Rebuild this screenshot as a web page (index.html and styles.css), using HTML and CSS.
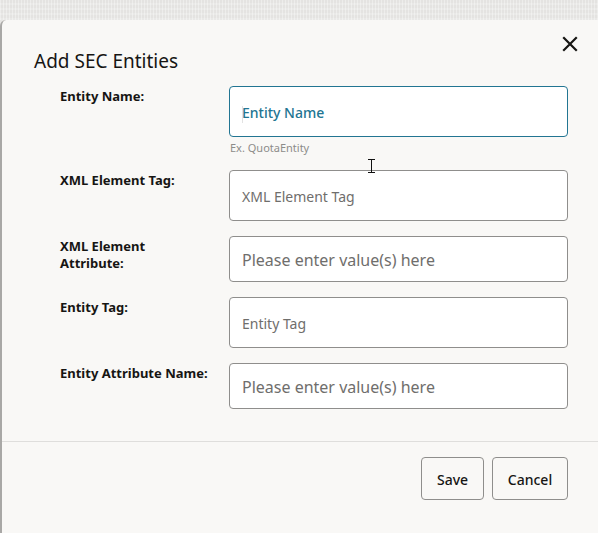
FILE: index.html
```html
<!DOCTYPE html>
<html>
<head>
<meta charset="utf-8">
<link rel="stylesheet" href="styles.css">
</head>
<body>
<div class="backdrop"></div>
<div class="dialog">
  <div class="header">
    <h1 class="title">Add SEC Entities</h1>
    <button class="close" aria-label="Close">
      <svg width="16" height="16" viewBox="0 0 16 16"><path d="M2 2 L14 14 M14 2 L2 14" stroke="#161513" stroke-width="2.2" stroke-linecap="square"/></svg>
    </button>
  </div>
  <div class="form">
    <div class="row">
      <label class="label">Entity Name:</label>
      <div class="field">
        <div class="input focused"><span class="caret"></span><span class="val teal">Entity Name</span></div>
        <div class="help">Ex. QuotaEntity</div>
      </div>
    </div>
    <div class="row">
      <label class="label">XML Element Tag:</label>
      <div class="field"><div class="input"><span class="val">XML Element Tag</span></div></div>
    </div>
    <div class="row">
      <label class="label">XML Element<br>Attribute:</label>
      <div class="field"><div class="input short"><span class="val big">Please enter value(s) here</span></div></div>
    </div>
    <div class="row">
      <label class="label">Entity Tag:</label>
      <div class="field"><div class="input"><span class="val">Entity Tag</span></div></div>
    </div>
    <div class="row">
      <label class="label">Entity Attribute Name:</label>
      <div class="field"><div class="input short"><span class="val big">Please enter value(s) here</span></div></div>
    </div>
  </div>
  <div class="footer">
    <button class="btn save">Save</button>
    <button class="btn cancel">Cancel</button>
  </div>
  <svg class="ibeam" width="9" height="14" viewBox="0 0 9 14"><path d="M1 0.5 H8 M4.5 0.5 V13.5 M1 13.5 H8" stroke="#111" stroke-width="1"/></svg>
</div>
</body>
</html>
```

FILE: styles.css
```css
* { box-sizing: border-box; }
html, body {
  margin: 0;
  padding: 0;
  height: 533px;
  overflow: hidden;
  background: #e6e5e3;
  font-family: "Noto Sans", "Open Sans", sans-serif;
}
.backdrop {
  height: 20px;
  background:
    repeating-linear-gradient(90deg, rgba(255,255,255,0.35) 0 1px, transparent 1px 3px),
    repeating-linear-gradient(0deg, rgba(255,255,255,0.2) 0 2px, transparent 2px 5px),
    #e4e3e1;
}
.dialog {
  position: relative;
  height: 513px;
  background: #f9f8f6;
  border-left: 2px solid #a9a8a6;
  border-top-left-radius: 6px;
}
.header {
  display: flex;
  justify-content: space-between;
  align-items: flex-start;
  padding: 27px 20px 0 32px;
}
.title {
  margin: 0;
  font-size: 19px;
  font-weight: 400;
  color: #161513;
  line-height: 28px;
}
.close {
  border: 0;
  background: transparent;
  padding: 0;
  margin-top: -11px;
  width: 16px;
  height: 16px;
}
.close svg { display: block; }
.form {
  padding: 11px 30px 0 58px;
  display: flex;
  flex-direction: column;
  gap: 15px;
}
.row {
  display: grid;
  grid-template-columns: 169px 339px;
}
.label {
  font-size: 13px;
  font-weight: 700;
  color: #161513;
  line-height: 17px;
  padding-top: 2px;
}
.input {
  height: 51px;
  background: #fff;
  border: 1px solid #8f8e8c;
  border-radius: 4px;
  display: flex;
  align-items: center;
  padding-left: 12px;
  padding-top: 2px;
  position: relative;
}
.input.short { height: 46px; }
.input.focused { border-color: #227592; }
.val {
  font-size: 14px;
  color: #6f6e6c;
}
.val.big { font-size: 16px; }
.val.teal { color: #227592; font-weight: 500; }
.caret {
  position: absolute;
  left: 12px;
  top: 19px;
  width: 1px;
  height: 17px;
  background: #e2e2e2;
}
.help {
  font-size: 11px;
  color: #8d8c8a;
  padding: 3px 0 0 1px;
  line-height: 15px;
}
.footer {
  margin-top: 32px;
  border-top: 1px solid #dfdedc;
  display: flex;
  justify-content: flex-end;
  gap: 8px;
  padding: 15px 30px 0 0;
}
.btn {
  height: 43px;
  background: transparent;
  border: 1px solid #8f8e8c;
  border-radius: 4px;
  font-family: inherit;
  font-size: 14px;
  color: #161513;
  font-weight: 500;
  padding-top: 2px;
}
.save { width: 63px; }
.cancel { width: 76px; }
.ibeam {
  position: absolute;
  left: 365px;
  top: 139px;
}
```
